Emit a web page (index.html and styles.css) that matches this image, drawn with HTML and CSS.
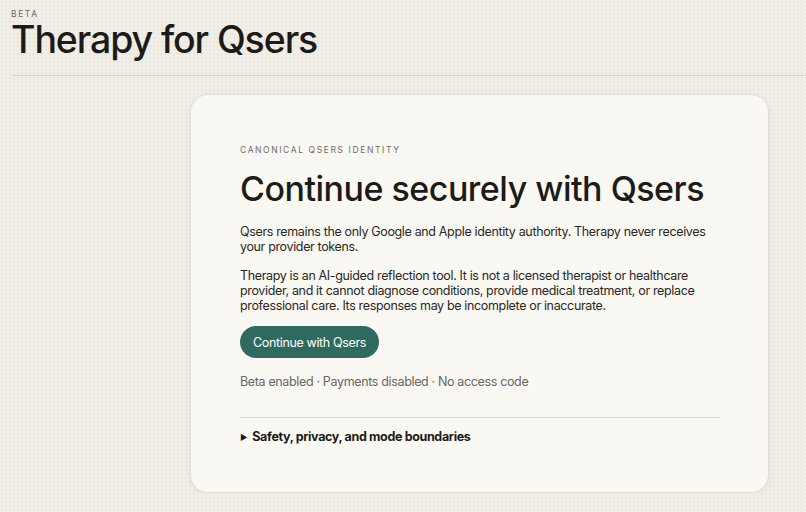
FILE: index.html
```html
<!DOCTYPE html>
<html lang="en">

<head>
    <meta charset="UTF-8">
    <meta name="viewport" content="width=device-width, initial-scale=1.0">
    <title>Therapy for Qsers</title>
    <link rel="stylesheet" href="styles.css">
</head>

<body>
    <header class="page-header">
        <p class="eyebrow">Beta</p>
        <h1 class="page-title">Therapy for Qsers</h1>
    </header>

    <main class="layout">
        <section class="card">
            <p class="card-eyebrow">Canonical Qsers identity</p>
            <h2 class="card-title">Continue securely with Qsers</h2>
            <p class="copy">Qsers remains the only Google and Apple identity authority. Therapy never receives your provider tokens.</p>
            <p class="copy">Therapy is an AI-guided reflection tool. It is not a licensed therapist or healthcare provider, and it cannot diagnose conditions, provide medical treatment, or replace professional care. Its responses may be incomplete or inaccurate.</p>
            <button class="primary-btn" type="button">Continue with Qsers</button>
            <p class="status">Beta enabled · Payments disabled · No access code</p>
            <details class="boundaries">
                <summary>Safety, privacy, and mode boundaries</summary>
                <p class="copy">Therapy is for reflection only.</p>
            </details>
        </section>
    </main>
</body>

</html>
```

FILE: styles.css
```css
body {
    font-family: Inter, "Noto Sans", sans-serif;
    margin: 0;
    padding: 0;
    background-color: #f1eee8;
    background-image: radial-gradient(rgba(120, 105, 80, 0.06) 1px, transparent 1px);
    background-size: 4px 4px;
    color: #1d1b18;
    overflow: hidden;
}

.page-header {
    margin-left: 11px;
    padding-top: 9px;
    padding-bottom: 14px;
    border-bottom: 1px solid #d9d4cb;
}

.eyebrow {
    margin: 0;
    font-size: 8.5px;
    letter-spacing: 1.6px;
    text-transform: uppercase;
    color: #6f6a62;
    line-height: 10px;
}

.page-title {
    margin: 0;
    font-size: 37.5px;
    font-weight: 500;
    letter-spacing: -1.1px;
    line-height: 42px;
}

.layout {
    padding: 18px 0 0 190px;
}

.card {
    width: 480px;
    padding: 50px 48px 48px 49px;
    background-color: #faf8f2;
    border: 1px solid #e2ddd4;
    border-radius: 18px;
    box-shadow: 0 2px 6px rgba(80, 65, 40, 0.06);
}

.card-eyebrow {
    margin: 0;
    font-size: 8.5px;
    letter-spacing: 1.6px;
    text-transform: uppercase;
    color: #6f6a62;
}

.card-title {
    margin: 13px 0 14px;
    font-size: 34px;
    font-weight: 500;
    letter-spacing: -0.5px;
    line-height: 42px;
}

.copy {
    margin: 0 0 14px;
    font-size: 12.5px;
    line-height: 15px;
    letter-spacing: -0.35px;
    color: #2a2824;
}

.primary-btn {
    margin-top: -1px;
    height: 32px;
    padding: 0 13px;
    border: none;
    border-radius: 16px;
    background-color: #2f6a5e;
    color: white;
    font-family: inherit;
    font-size: 12.5px;
    letter-spacing: -0.35px;
    cursor: pointer;
}

.status {
    margin: 16px 0 28px;
    font-size: 12.5px;
    line-height: 15px;
    letter-spacing: -0.35px;
    color: #6b665e;
}

.boundaries {
    border-top: 1px solid #dcd7ce;
    padding-top: 11px;
}

.boundaries summary {
    list-style: none;
    font-size: 12.5px;
    font-weight: 700;
    letter-spacing: -0.35px;
    cursor: pointer;
}

.boundaries summary::-webkit-details-marker {
    display: none;
}

.boundaries summary::before {
    content: "▶";
    display: inline-block;
    margin-right: 5px;
    font-size: 8px;
    vertical-align: 1px;
}
```
